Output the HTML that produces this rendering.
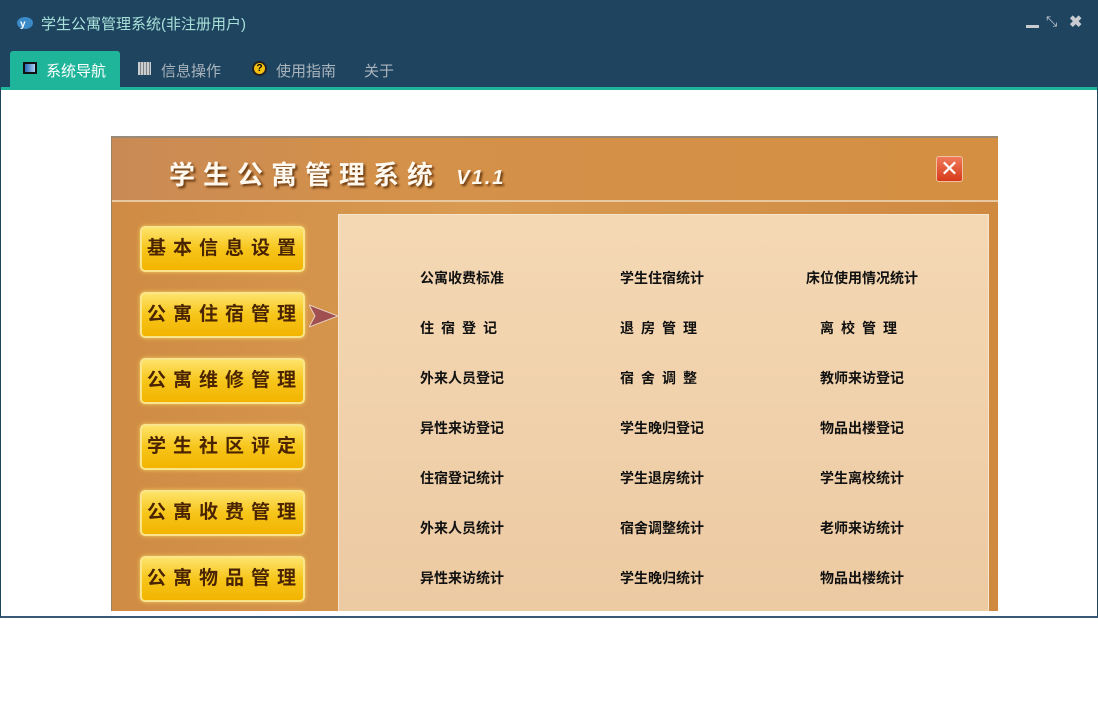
<!DOCTYPE html>
<html><head><meta charset="utf-8"><style>
*{margin:0;padding:0;box-sizing:border-box}
body{width:1098px;height:728px;background:#fff;font-family:"Liberation Sans","Noto Sans CJK SC",sans-serif;position:relative;overflow:hidden}
.win{position:absolute;left:0;top:0;width:1098px;height:618px;border:1px solid #1e4460;border-bottom:2px solid #3a5a78;background:#fff}
.bar{position:absolute;left:0;top:0;width:1096px;height:86px;background:#1e4460}
.teal{position:absolute;left:0;top:86px;width:1096px;height:3px;background:#1fb59a}
.title{position:absolute;left:40px;top:12px;color:#a8e0d8;font-size:15px}
.tab{position:absolute;top:59px;font-size:15px;color:#aab4bc}
.act{position:absolute;left:9px;top:50px;width:110px;height:36px;background:#1fb59a;border-radius:3px 3px 0 0}
.img{position:absolute;left:110px;top:135px;width:887px;height:475px;background:linear-gradient(90deg,#cf8b43,#d99a52 40%,#cf8a40);border-top:2px solid #9a8a7a;border-left:1px solid #a08060;overflow:hidden}
.hdr{position:absolute;left:0;top:0;width:887px;height:64px;border-bottom:2px solid #e8c8a0;background:linear-gradient(90deg,#c98a55,#d4914a 30%,#d48f42)}
.ht{position:absolute;left:57px;top:17px;font-size:26px;color:#fff8ee;letter-spacing:8px;font-weight:bold;text-shadow:2px 2px 2px #6a3a10}
.panel{position:absolute;left:226px;top:76px;width:651px;height:400px;background:linear-gradient(180deg,#f4d8b4,#eccaa2);border:1px solid #f6e6d0}
.btn{position:absolute;left:28px;width:165px;height:46px;border-radius:5px;background:linear-gradient(180deg,#fde36a,#f7c51a 50%,#f2b400);border:2px solid #fbe58a;box-shadow:0 0 4px #f5d060;color:#4a2400;font-size:19px;font-weight:bold;letter-spacing:7px;padding-left:5px;text-align:center;line-height:42px}
.it{position:absolute;width:200px;text-align:center;font-size:14px;font-weight:bold;color:#111}
.x{position:absolute;left:824px;top:18px;width:27px;height:26px;border-radius:3px;background:linear-gradient(180deg,#f07a5a,#d63a1a);border:1px solid #f0c0a0;color:#fff;font-size:22px;line-height:24px;text-align:center}
</style></head><body>
<div class="win">
<div class="bar"></div><div class="teal"></div>
<svg style="position:absolute;left:16px;top:15px" width="16" height="14"><ellipse cx="8" cy="7" rx="8" ry="6" fill="#3a8ac8"/><text x="3" y="11" font-size="10" fill="#fff" font-weight="bold">y</text></svg>
<div class="title">学生公寓管理系统(非注册用户)</div>
<div style="position:absolute;left:1025px;top:24px;width:13px;height:3px;background:#c8ccd0"></div>
<div style="position:absolute;left:1045px;top:12px;color:#c8ccd0;font-size:14px">⤡</div>
<div style="position:absolute;left:1068px;top:11px;color:#c8ccd0;font-size:16px;font-weight:bold">✖</div>
<div class="act"></div>
<div style="position:absolute;left:22px;top:61px;width:14px;height:12px;border:2px solid #111;background:linear-gradient(90deg,#2a6ab8,#a8d0f0)"></div>
<div class="tab" style="left:45px;color:#fff">系统导航</div>
<div style="position:absolute;left:137px;top:61px;width:13px;height:13px;background:repeating-linear-gradient(90deg,#ddd 0 2px,#888 2px 3px),#ccc;opacity:.9"></div>
<div class="tab" style="left:160px">信息操作</div>
<div style="position:absolute;left:251px;top:60px;width:15px;height:15px;border-radius:50%;background:#f4c010;border:2px solid #222;font-size:10px;font-weight:bold;text-align:center;line-height:11px">?</div>
<div class="tab" style="left:275px">使用指南</div>
<div class="tab" style="left:363px">关于</div>
<div class="img">
<div class="hdr"><div class="ht">学生公寓管理系统 <i style="font-size:20px;letter-spacing:2px">V1.1</i></div><div class="x">✕</div></div>
<div class="panel"></div>
<div class="btn" style="top:88px">基本信息设置</div>
<div class="btn" style="top:154px">公寓住宿管理</div>
<div class="btn" style="top:220px">公寓维修管理</div>
<div class="btn" style="top:286px">学生社区评定</div>
<div class="btn" style="top:352px">公寓收费管理</div>
<div class="btn" style="top:418px">公寓物品管理</div>
<svg style="position:absolute;left:197px;top:166px" width="30" height="24"><polygon points="0,1 29,12 0,23 6,12" fill="#a05050" stroke="#e8d0c0"/></svg>
<div class="it" style="left:250px;top:130px">公寓收费标准</div><div class="it" style="left:450px;top:130px">学生住宿统计</div><div class="it" style="left:650px;top:130px">床位使用情况统计</div>
<div class="it" style="left:250px;top:180px;letter-spacing:7px">住宿登记</div><div class="it" style="left:450px;top:180px;letter-spacing:7px">退房管理</div><div class="it" style="left:650px;top:180px;letter-spacing:7px">离校管理</div>
<div class="it" style="left:250px;top:230px">外来人员登记</div><div class="it" style="left:450px;top:230px;letter-spacing:7px">宿舍调整</div><div class="it" style="left:650px;top:230px">教师来访登记</div>
<div class="it" style="left:250px;top:280px">异性来访登记</div><div class="it" style="left:450px;top:280px">学生晚归登记</div><div class="it" style="left:650px;top:280px">物品出楼登记</div>
<div class="it" style="left:250px;top:330px">住宿登记统计</div><div class="it" style="left:450px;top:330px">学生退房统计</div><div class="it" style="left:650px;top:330px">学生离校统计</div>
<div class="it" style="left:250px;top:380px">外来人员统计</div><div class="it" style="left:450px;top:380px">宿舍调整统计</div><div class="it" style="left:650px;top:380px">老师来访统计</div>
<div class="it" style="left:250px;top:430px">异性来访统计</div><div class="it" style="left:450px;top:430px">学生晚归统计</div><div class="it" style="left:650px;top:430px">物品出楼统计</div>
</div>
</div>
</body></html>
